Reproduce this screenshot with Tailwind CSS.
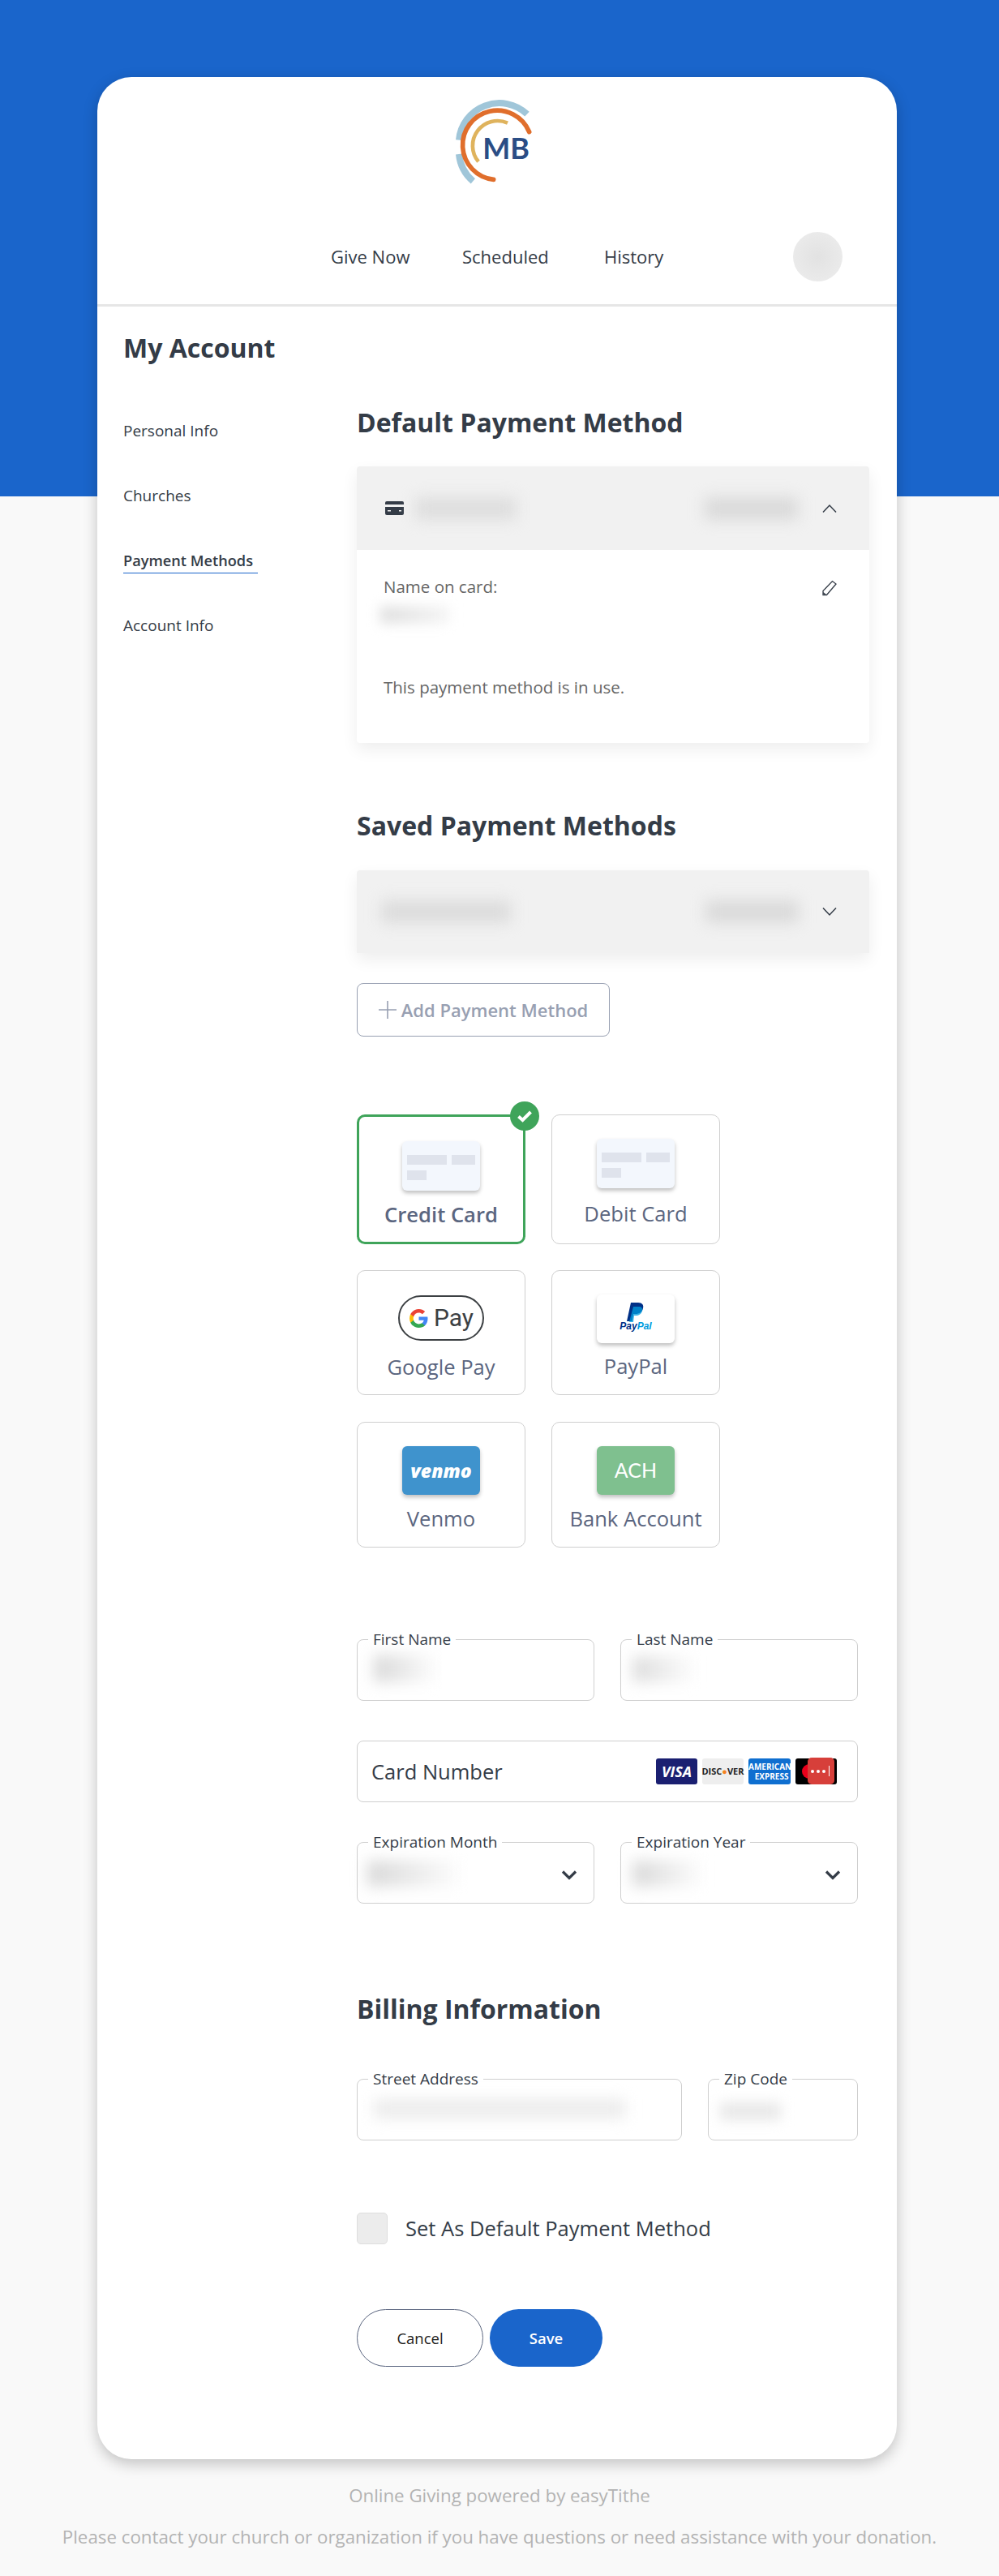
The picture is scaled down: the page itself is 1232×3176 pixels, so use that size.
<!DOCTYPE html>
<html lang="en">
<head>
  <meta charset="UTF-8" />
  <meta name="viewport" content="width=device-width, initial-scale=1.0"/>
  <title>My Account</title>
  <script src="https://cdn.jsdelivr.net/npm/@tailwindcss/browser@4"></script>
</head>
<body class="relative h-[3176px] overflow-hidden bg-[#f9f9f9] font-['Open_Sans',sans-serif] text-[#343c47]">

  <!-- blue band behind the card -->
  <div class="absolute top-0 left-0 w-full h-[612px] bg-[#1a65cb]"></div>

  <div class="relative ml-[120px] mt-[95px] w-[986px] h-[2937px] bg-white rounded-[42px] shadow-[0_6px_18px_rgba(0,0,0,0.22)]">

    <!-- header -->
    <header class="h-[283px] border-b-[3px] border-[#e6e6e6]">
      <div class="pt-[15px] pl-[410px] h-[145px]">
        <svg width="150" height="130" viewBox="0 0 450 390" fill="none">
          <path d="M360 92A150 150 0 0 0 108 188M108 240A150 150 0 0 0 160 340" stroke="#a0c6d9" stroke-width="24"/>
          <path d="M368 158A128 128 0 1 0 236 334" stroke="#e06e2c" stroke-width="17" stroke-linecap="round"/>
          <path d="M288 125A92 92 0 0 0 180 268" stroke="#dfb35d" stroke-width="14"/>
          <text x="196" y="258" font-family="Lato, sans-serif" font-size="108" font-weight="700" fill="#2a4d85">MB</text>
        </svg>
      </div>
      <nav class="relative flex items-center h-[61px] mt-[46px] pl-[288px] text-[22px] text-[#343c47]">
        <a class="w-[162px]">Give Now</a>
        <a class="w-[175px]">Scheduled</a>
        <a>History</a>
        <div class="absolute left-[858px] top-0 w-[61px] h-[61px] rounded-full bg-radial from-[#e2e2e2] to-[#eeeeee]"></div>
      </nav>
    </header>

    <h1 class="ml-[32px] mt-[31px] h-[40px] leading-[40px] text-[32px] font-bold">My Account</h1>

    <div class="flex">
      <!-- sidebar -->
      <aside class="w-[320px] pl-[32px] pt-[67px] flex flex-col gap-[50px] text-[19px] leading-[30px]">
        <a>Personal Info</a>
        <a>Churches</a>
        <a class="w-[166px] text-[18.200px] whitespace-nowrap font-semibold border-b-[1.500px] border-[#1a65cb] h-[31px] -mb-[1px]">Payment Methods</a>
        <a>Account Info</a>
      </aside>

      <main class="w-[632px]">
        <h2 class="mt-[52px] h-[40px] leading-[40px] text-[32px] font-bold">Default Payment Method</h2>

        <section class="mt-[34px] h-[341px] rounded-[4px] shadow-[0_8px_20px_rgba(0,0,0,0.07)]">
          <div class="flex items-center h-[103px] pl-[35px] pr-[40px] bg-[#f1f1f1] rounded-t-[4px]">
            <svg width="23" height="17" viewBox="0 0 23 17"><rect width="23" height="17" rx="2" fill="#343c47"/><rect y="4" width="23" height="3" fill="#f1f1f1"/><rect x="3" y="11" width="4" height="1.5" fill="#f1f1f1"/><rect x="17" y="11" width="3" height="1.500" fill="#f1f1f1"/></svg>
            <div class="ml-[14px] w-[125px] h-[28px] bg-[#dedede] blur-[9px]"></div>
            <div class="ml-[232px] w-[115px] h-[28px] bg-[#dadada] blur-[9px]"></div>
            <svg class="ml-auto" width="18" height="12" viewBox="0 0 18 12" fill="none"><path d="M1 10.500 9 2l8 8.500" stroke="#343c47" stroke-width="1.500"/></svg>
          </div>
          <div class="relative pl-[33px] pt-[32px] text-[20.500px] text-[#666]">
            <p class="h-[26px] leading-[26px]">Name on card:</p>
            <div class="ml-[-4px] mt-[12px] w-[85px] h-[20px] bg-linear-to-r from-[#dcdcdc] to-[#f4f4f4] blur-[8px]"></div>
            <p class="mt-[65px] h-[28px] leading-[28px]">This payment method is in use.</p>
            <svg class="absolute right-[39px] top-[37px]" width="20" height="20" viewBox="0 0 20 20" fill="none"><path d="M2 18.500v-5L13.500 1.500l4.500 3.500L6.500 18.500zM2 15.500l3.500 3" stroke="#343c47" stroke-width="1.300"/></svg>
          </div>
        </section>

        <h2 class="mt-[82px] h-[40px] leading-[40px] text-[32px] font-bold">Saved Payment Methods</h2>

        <section class="mt-[35px] flex items-center h-[102px] pl-[30px] pr-[40px] bg-[#f1f1f1] rounded-t-[4px] shadow-[0_8px_20px_rgba(0,0,0,0.07)]">
          <div class="w-[160px] h-[28px] bg-[#dcdcdc] blur-[9px]"></div>
          <div class="ml-[240px] w-[115px] h-[28px] bg-[#dadada] blur-[9px]"></div>
          <svg class="ml-auto" width="18" height="12" viewBox="0 0 18 12" fill="none"><path d="M1 1.500 9 10l8-8.500" stroke="#343c47" stroke-width="1.500"/></svg>
        </section>

        <button class="mt-[37px] flex items-center justify-center gap-[6px] w-[312px] h-[66px] bg-white border border-[#98a0b2] rounded-[8px] text-[22px] font-semibold text-[#98a0b2]">
          <svg width="22" height="22" viewBox="0 0 22 22" fill="none"><path d="M11 0v22M0 11h22" stroke="#98a0b2" stroke-width="1.600"/></svg>
          Add Payment Method
        </button>

        <!-- payment type tiles -->
        <div class="mt-[96px] w-[448px] grid grid-cols-2 gap-x-[32px] text-[25.600px] text-[#5b6680]">
          <div class="relative h-[160px] pt-[30px] flex flex-col items-center border-[3px] border-[#3fa45a] rounded-[10px]">
            <div class="w-[96px] h-[61px] pt-[17px] pl-[6px] bg-[#f3f7fd] rounded-[6px] shadow-[0_3px_5px_rgba(0,0,0,0.25)]">
              <div class="flex gap-[6px]"><div class="w-[49px] h-[12px] bg-[#dfe3ec]"></div><div class="w-[29px] h-[12px] bg-[#dfe3ec]"></div></div>
              <div class="mt-[7px] w-[24px] h-[12px] bg-[#dfe3ec]"></div>
            </div>
            <span class="mt-[14px] leading-[32px] font-semibold">Credit Card</span>
            <div class="absolute left-[186px] top-[-19px] w-[36px] h-[36px] rounded-full bg-[#3fa45a] flex items-center justify-center">
              <svg width="20" height="16" viewBox="0 0 20 16" fill="none"><path d="M2.500 8.500 7.500 13 17.500 3" stroke="#fff" stroke-width="4"/></svg>
            </div>
          </div>
          <div class="h-[160px] pt-[29px] flex flex-col items-center border border-[#cfcfcf] rounded-[10px]">
            <div class="w-[96px] h-[61px] pt-[17px] pl-[6px] bg-[#f3f7fd] rounded-[6px] shadow-[0_3px_5px_rgba(0,0,0,0.25)]">
              <div class="flex gap-[6px]"><div class="w-[49px] h-[12px] bg-[#dfe3ec]"></div><div class="w-[29px] h-[12px] bg-[#dfe3ec]"></div></div>
              <div class="mt-[7px] w-[24px] h-[12px] bg-[#dfe3ec]"></div>
            </div>
            <span class="mt-[16px] leading-[32px]">Debit Card</span>
          </div>

          <div class="mt-[32px] h-[154px] pt-[30px] flex flex-col items-center border border-[#cfcfcf] rounded-[10px]">
            <div class="w-[106px] h-[56px] flex items-center justify-center gap-[6px] border-2 border-[#3c4043] rounded-full">
              <svg width="25" height="25" viewBox="0 0 24 24"><path fill="#4285F4" d="M22.56 12.25c0-.78-.07-1.53-.2-2.25H12v4.26h5.92c-.26 1.37-1.04 2.53-2.21 3.31v2.77h3.57c2.08-1.92 3.28-4.74 3.28-8.09z"/><path fill="#34A853" d="M12 23c2.97 0 5.46-.98 7.28-2.66l-3.57-2.77c-.98.66-2.23 1.06-3.71 1.06-2.86 0-5.29-1.93-6.16-4.53H2.18v2.84C3.99 20.53 7.7 23 12 23z"/><path fill="#FBBC05" d="M5.84 14.09c-.22-.66-.35-1.36-.35-2.09s.13-1.43.35-2.09V7.07H2.18C1.43 8.55 1 10.22 1 12s.43 3.45 1.18 4.93l2.85-2.22.81-.62z"/><path fill="#EA4335" d="M12 5.38c1.62 0 3.06.56 4.21 1.64l3.15-3.15C17.45 2.09 14.97 1 12 1 7.7 1 3.99 3.47 2.18 7.07l3.66 2.84c.87-2.6 3.3-4.53 6.16-4.53z"/></svg>
              <span class="text-[30px] leading-none text-[#3c4043] font-['Roboto',sans-serif]">Pay</span>
            </div>
            <span class="mt-[17px] leading-[32px]">Google Pay</span>
          </div>
          <div class="mt-[32px] h-[154px] pt-[29px] flex flex-col items-center border border-[#cfcfcf] rounded-[10px]">
            <div class="w-[96px] h-[60px] flex flex-col items-center pt-[10px] bg-white rounded-[6px] shadow-[0_3px_5px_rgba(0,0,0,0.25)]">
              <svg width="22" height="25" viewBox="0 0 22 25"><path fill="#003087" d="M5 0h9c5 0 7 3 6 7-1 5-5 7-9 7H8l-1.500 9H0z"/><path fill="#009cde" opacity="0.75" d="M8 5h7c3 0 5 2 4 5-1 4-4 6-8 6H9l-1 8H3z"/></svg>
              <span class="-mt-[3px] text-[12px] leading-[14px] font-bold italic text-[#003087] font-['Liberation_Sans',sans-serif]">Pay<span class="text-[#009cde]">Pal</span></span>
            </div>
            <span class="mt-[13px] leading-[32px]">PayPal</span>
          </div>

          <div class="mt-[33px] h-[155px] pt-[29px] flex flex-col items-center border border-[#cfcfcf] rounded-[10px]">
            <div class="w-[96px] h-[60px] flex items-center justify-center bg-[#3f93cd] rounded-[6px] shadow-[0_3px_5px_rgba(0,0,0,0.25)] text-white text-[23px] font-extrabold italic">venmo</div>
            <span class="mt-[14px] leading-[32px]">Venmo</span>
          </div>
          <div class="mt-[33px] h-[155px] pt-[29px] flex flex-col items-center border border-[#cfcfcf] rounded-[10px]">
            <div class="w-[96px] h-[60px] flex items-center justify-center bg-[#7fc08f] rounded-[6px] shadow-[0_3px_5px_rgba(0,0,0,0.25)] text-white text-[25px] font-['Lato',sans-serif]">ACH</div>
            <span class="mt-[14px] leading-[32px]">Bank Account</span>
          </div>
        </div>

        <!-- card form -->
        <div class="mt-[113px] w-[618px] flex gap-[32px]">
          <div class="relative w-[293px] h-[76px] border border-[#cfcfcf] rounded-[8px]">
            <label class="absolute left-[13px] top-[-13px] px-[6px] bg-white text-[19px] leading-[24px]">First Name</label>
            <div class="absolute left-[20px] top-[18px] w-[80px] h-[34px] bg-linear-to-r from-[#d8d8d8] to-white blur-[9px]"></div>
          </div>
          <div class="relative w-[293px] h-[76px] border border-[#cfcfcf] rounded-[8px]">
            <label class="absolute left-[13px] top-[-13px] px-[6px] bg-white text-[19px] leading-[24px]">Last Name</label>
            <div class="absolute left-[14px] top-[20px] w-[80px] h-[32px] bg-linear-to-r from-[#dcdcdc] to-white blur-[9px]"></div>
          </div>
        </div>

        <div class="mt-[49px] w-[618px] h-[76px] flex items-center pl-[17px] pr-[25px] border border-[#cfcfcf] rounded-[8px]">
          <span class="text-[25.500px]">Card Number</span>
          <div class="ml-auto flex gap-[6px]">
            <div class="w-[51px] h-[32px] flex items-center justify-center bg-[#1a1f71] rounded-[3px] text-white text-[18px] font-bold italic">VISA</div>
            <div class="w-[51px] h-[32px] flex items-center justify-center bg-[#eeeeee] rounded-[3px] text-[#222] text-[11px] font-bold">DISC<span class="text-[#f58220]">●</span>VER</div>
            <div class="w-[52px] h-[32px] flex flex-col justify-center bg-[#0f6fd0] rounded-[3px] text-white text-[10px] leading-[12px] font-bold text-center">AMERICAN<br/>&nbsp;&nbsp;EXPRESS</div>
            <div class="relative w-[51px] h-[32px] bg-black rounded-[3px]">
              <div class="absolute left-[8px] top-[7px] w-[18px] h-[18px] rounded-full bg-[#eb001b]"></div>
              <div class="absolute left-[15px] top-[-1px] w-[33px] h-[33px] rounded-[5px] bg-[#d73f3a] flex items-center gap-[3px] pl-[4px]">
                <div class="w-[4px] h-[4px] rounded-full bg-white"></div><div class="w-[4px] h-[4px] rounded-full bg-white"></div><div class="w-[4px] h-[4px] rounded-full bg-white"></div><div class="w-[1px] h-[13px] ml-[1px] bg-white"></div>
              </div>
            </div>
          </div>
        </div>

        <div class="mt-[49px] w-[618px] flex gap-[32px]">
          <div class="relative w-[293px] h-[76px] border border-[#cfcfcf] rounded-[8px]">
            <label class="absolute left-[13px] top-[-13px] px-[6px] bg-white text-[19px] leading-[24px]">Expiration Month</label>
            <div class="absolute left-[12px] top-[22px] w-[120px] h-[32px] bg-linear-to-r from-[#d8d8d8] to-white blur-[9px]"></div>
            <svg class="absolute right-[20px] top-[33px]" width="20" height="14" viewBox="0 0 20 14" fill="none"><path d="M2 2.500 10 10.500 18 2.500" stroke="#343c47" stroke-width="3.200"/></svg>
          </div>
          <div class="relative w-[293px] h-[76px] border border-[#cfcfcf] rounded-[8px]">
            <label class="absolute left-[13px] top-[-13px] px-[6px] bg-white text-[19px] leading-[24px]">Expiration Year</label>
            <div class="absolute left-[14px] top-[22px] w-[90px] h-[32px] bg-linear-to-r from-[#d8d8d8] to-white blur-[9px]"></div>
            <svg class="absolute right-[20px] top-[33px]" width="20" height="14" viewBox="0 0 20 14" fill="none"><path d="M2 2.500 10 10.500 18 2.500" stroke="#343c47" stroke-width="3.200"/></svg>
          </div>
        </div>

        <h2 class="mt-[110px] h-[40px] leading-[40px] text-[32px] font-bold">Billing Information</h2>

        <div class="mt-[66px] w-[618px] flex gap-[32px]">
          <div class="relative w-[401px] h-[76px] border border-[#cfcfcf] rounded-[8px]">
            <label class="absolute left-[13px] top-[-13px] px-[6px] bg-white text-[19px] leading-[24px]">Street Address</label>
            <div class="absolute left-[20px] top-[24px] w-[310px] h-[24px] bg-[#ececec] blur-[9px]"></div>
          </div>
          <div class="relative w-[185px] h-[76px] border border-[#cfcfcf] rounded-[8px]">
            <label class="absolute left-[13px] top-[-13px] px-[6px] bg-white text-[19px] leading-[24px]">Zip Code</label>
            <div class="absolute left-[14px] top-[28px] w-[75px] h-[22px] bg-[#e8e8e8] blur-[8px]"></div>
          </div>
        </div>

        <div class="mt-[89px] flex items-center gap-[22px]">
          <div class="w-[38px] h-[39px] bg-[#ececec] border border-[#dedede] rounded-[5px]"></div>
          <span class="text-[25.500px] leading-[39px]">Set As Default Payment Method</span>
        </div>

        <div class="mt-[80px] flex gap-[8px]">
          <button class="w-[156px] h-[71px] bg-white border border-[#5b6680] rounded-[36px] text-[18.500px] text-[#222]">Cancel</button>
          <button class="w-[139px] h-[71px] bg-[#1a65cb] rounded-[36px] text-[18.500px] font-semibold text-white">Save</button>
        </div>
      </main>
    </div>
  </div>

  <footer class="relative text-center text-[#b3b3b3]">
    <p class="mt-[30px] h-[30px] leading-[30px] text-[22.300px]">Online Giving powered by easyTithe</p>
    <p class="mt-[21px] h-[30px] leading-[30px] text-[22.300px]">Please contact your church or organization if you have questions or need assistance with your donation.</p>
  </footer>
</body>
</html>
